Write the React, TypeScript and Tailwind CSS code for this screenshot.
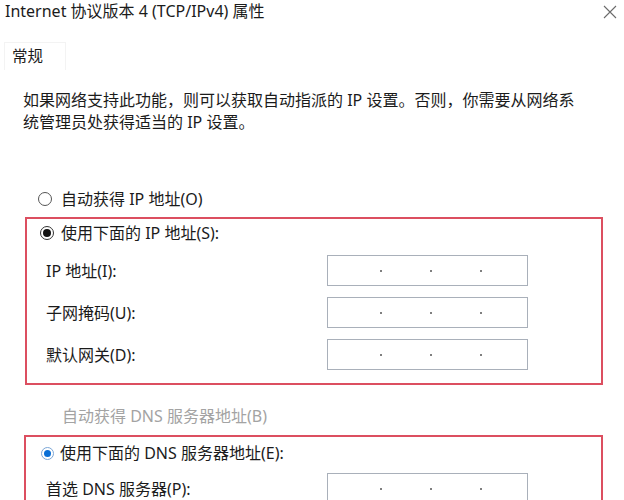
import React from 'react';

const font = "font-['Noto_Sans','Noto_Sans_CJK_SC',sans-serif]";

function IpInput() {
  return (
    <div className="w-[201px] h-[31px] border border-[#a9b0ba] bg-white flex items-center pl-[52px] gap-[48px]">
      <span className="w-[2px] h-[2px] rounded-full bg-[#555]" />
      <span className="w-[2px] h-[2px] rounded-full bg-[#555]" />
      <span className="w-[2px] h-[2px] rounded-full bg-[#555]" />
    </div>
  );
}

function FieldRow({ label }: { label: string }) {
  return (
    <div className="flex items-center">
      <span className="w-[302px] pl-[21px] leading-[22px]">{label}</span>
      <IpInput />
    </div>
  );
}

export default function App() {
  return (
    <div className={`w-[624px] h-[500px] overflow-hidden bg-white text-[#1b1b1b] text-[16px] ${font}`}>
      {/* title bar */}
      <div className="flex justify-between items-center h-[22px] pl-[5px] pr-[7px]">
        <span className="leading-[22px]">Internet 协议版本 4 (TCP/IPv4) 属性</span>
        <svg width="14" height="14" viewBox="0 0 14 14" className="mt-[1px]">
          <path d="M1 1 L13 13 M13 1 L1 13" stroke="#6b6b6b" strokeWidth="1.1" fill="none" />
        </svg>
      </div>

      {/* tab */}
      <div className="mt-[20px] ml-[4px] w-[62px] h-[28px] border-t border-l border-r border-[#f3f3f3] pt-[2px] pl-[7px] text-[15.5px] leading-[22px]">
        常规
      </div>

      {/* description */}
      <p className="mt-[19px] pl-[23px] leading-[22px]">
        如果网络支持此功能，则可以获取自动指派的 IP 设置。否则，你需要从网络系
        <br />
        统管理员处获得适当的 IP 设置。
      </p>

      {/* auto IP */}
      <div className="mt-[55px] pl-[38px] flex items-center gap-[9px] h-[22px]">
        <span className="w-[14px] h-[14px] rounded-full border border-[#555]" />
        <span className="leading-[22px]">自动获得 IP 地址(O)</span>
      </div>

      {/* manual IP */}
      <div className="mt-[7px] ml-[25px] w-[578px] h-[168px] border-2 border-[#dc4f60] pt-[3px]">
        <div className="flex items-center gap-[7px] h-[22px] pl-[13px]">
          <span className="w-[14px] h-[14px] rounded-full border border-[#333] flex items-center justify-center">
            <span className="w-[8px] h-[8px] rounded-full bg-[#111]" />
          </span>
          <span className="leading-[22px]">使用下面的 IP 地址(S):</span>
        </div>
        <div className="mt-[11px] flex flex-col gap-[11px] -ml-[2px]">
          <FieldRow label="IP 地址(I):" />
          <FieldRow label="子网掩码(U):" />
          <FieldRow label="默认网关(D):" />
        </div>
      </div>

      {/* auto DNS (disabled) */}
      <div className="mt-[20px] pl-[62px] h-[22px] leading-[22px] text-[#a3a3a3]">
        自动获得 DNS 服务器地址(B)
      </div>

      {/* manual DNS */}
      <div className="mt-[8px] ml-[24px] w-[579px] h-[120px] border-2 border-[#dc4f60] pt-[5px]">
        <div className="flex items-center gap-[6px] h-[22px] pl-[15px]">
          <span className="w-[13px] h-[13px] rounded-full border border-[#7ba6d6] flex items-center justify-center">
            <span className="w-[7px] h-[7px] rounded-full bg-[#0a6fd6]" />
          </span>
          <span className="leading-[22px]">使用下面的 DNS 服务器地址(E):</span>
        </div>
        <div className="mt-[9px] -ml-[1px]">
          <FieldRow label="首选 DNS 服务器(P):" />
        </div>
      </div>
    </div>
  );
}
